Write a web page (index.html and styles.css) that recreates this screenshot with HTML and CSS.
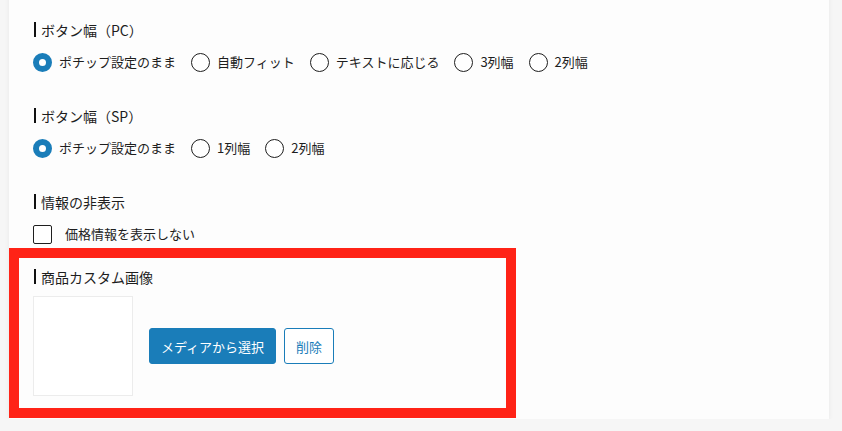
FILE: index.html
```html
<!DOCTYPE html>
<html lang="ja">
<head>
  <meta charset="UTF-8" />
  <meta name="viewport" content="width=device-width, initial-scale=1.0"/>
  <title>ポチップ設定</title>
  <link rel="stylesheet" href="styles.css">
</head>
<body>

<div class="panel">

  <!-- ボタン幅（PC） -->
  <div class="field">
    <h3 class="field-title">ボタン幅（PC）</h3>
    <div class="choices">
      <label class="choice"><input type="radio" name="pc" checked><span>ポチップ設定のまま</span></label>
      <label class="choice"><input type="radio" name="pc"><span>自動フィット</span></label>
      <label class="choice"><input type="radio" name="pc"><span>テキストに応じる</span></label>
      <label class="choice"><input type="radio" name="pc"><span>3列幅</span></label>
      <label class="choice"><input type="radio" name="pc"><span>2列幅</span></label>
    </div>
  </div>

  <!-- ボタン幅（SP） -->
  <div class="field">
    <h3 class="field-title">ボタン幅（SP）</h3>
    <div class="choices">
      <label class="choice"><input type="radio" name="sp" checked><span>ポチップ設定のまま</span></label>
      <label class="choice"><input type="radio" name="sp"><span>1列幅</span></label>
      <label class="choice"><input type="radio" name="sp"><span>2列幅</span></label>
    </div>
  </div>

  <!-- 情報の非表示 -->
  <div class="field">
    <h3 class="field-title">情報の非表示</h3>
    <div class="choices">
      <label class="choice check"><input type="checkbox"><span>価格情報を表示しない</span></label>
    </div>
  </div>

  <!-- 商品カスタム画像（赤枠で強調） -->
  <div class="field highlight">
    <h3 class="field-title">商品カスタム画像</h3>
    <div class="image-row">
      <div class="image-preview"></div>
      <button class="btn btn-primary">メディアから選択</button>
      <button class="btn btn-outline">削除</button>
    </div>
  </div>

</div>

</body>
</html>
```

FILE: styles.css
```css
body {
  font-family: "Noto Sans CJK JP", "Noto Sans", sans-serif;
  background-color: #f6f6f6;
  margin: 0;
  color: #1e1e1e;
}
.panel {
  width: 820px;
  margin: -10px 0 0 9px;
  padding: 30px 0 1px 24px;
  box-sizing: border-box;
  background-color: #fdfdfd;
  box-shadow: 0 1px 5px rgba(0, 0, 0, 0.06);
}
.field {
  margin-bottom: 34px;
}
.field-title {
  position: relative;
  margin: 0 0 12px;
  height: 20px;
  line-height: 20px;
  padding-left: 8px;
  font-size: 14px;
  font-weight: normal;
}
.field-title::before {
  content: "";
  position: absolute;
  left: 1px;
  top: 2px;
  width: 2px;
  height: 15px;
  background-color: #111;
}
.choices {
  display: flex;
  align-items: center;
  gap: 15px;
  height: 20px;
}
.choice {
  display: flex;
  align-items: center;
  gap: 7px;
  font-size: 13px;
  line-height: 20px;
  cursor: pointer;
}
.choice input {
  appearance: none;
  -webkit-appearance: none;
  margin: 0;
  width: 19px;
  height: 19px;
  box-sizing: border-box;
  border: 1px solid #1e1e1e;
  border-radius: 50%;
  background: #fff;
}
.choice input:checked {
  border: 6px solid #1a7db9;
}
.check {
  gap: 13px;
}
.check input {
  width: 19px;
  height: 19px;
  border-radius: 2px;
}

/* 赤枠 */
.highlight {
  width: 507px;
  box-sizing: border-box;
  margin: -30px 0 0 -24px;
  padding: 9px 0 12px 14px;
  border: 10px solid #ff2317;
}
.highlight .field-title {
  margin-bottom: 9px;
}
.image-row {
  display: flex;
  align-items: center;
}
.image-preview {
  width: 100px;
  height: 100px;
  box-sizing: border-box;
  border: 1px solid #ececec;
  background: #fff;
  margin-right: 16px;
}
.btn {
  height: 36px;
  padding: 0 11px;
  border-radius: 3px;
  font-family: inherit;
  font-size: 13px;
  cursor: pointer;
}
.btn-primary {
  background-color: #1a7db9;
  border: 1px solid #1a7db9;
  color: #fff;
  margin-right: 8px;
}
.btn-outline {
  background-color: #fff;
  border: 1px solid #1a7db9;
  color: #1a7db9;
}
```
